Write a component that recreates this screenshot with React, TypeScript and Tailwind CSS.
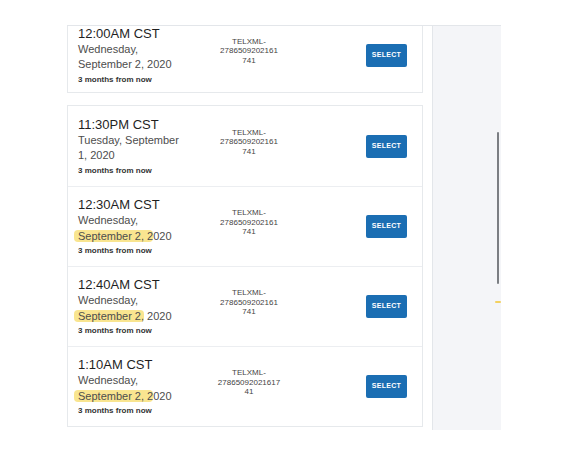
import React from 'react';

type Slot = {
  time: string;
  day: string;
  date: string;
  highlight?: string;
  rest?: string;
  id: string[];
};

const FIRST: Slot = {
  time: '12:00AM CST',
  day: 'Wednesday,',
  date: 'September 2, 2020',
  id: ['TELXML-', '2786509202161', '741'],
};

const SLOTS: Slot[] = [
  { time: '11:30PM CST', day: 'Tuesday, September', date: '1, 2020', id: ['TELXML-', '2786509202161', '741'] },
  { time: '12:30AM CST', day: 'Wednesday,', date: '', highlight: 'September 2, 2', rest: '020', id: ['TELXML-', '2786509202161', '741'] },
  { time: '12:40AM CST', day: 'Wednesday,', date: '', highlight: 'September 2,', rest: ' 2020', id: ['TELXML-', '2786509202161', '741'] },
  { time: '1:10AM CST', day: 'Wednesday,', date: '', highlight: 'September 2, 2', rest: '020', id: ['TELXML-', '27865092021617', '41'] },
];

const Row = ({ slot, first, tall }: { slot: Slot; first?: boolean; tall?: boolean }) => (
  <div
    className={`flex items-center pl-[10px] pr-[15px] ${tall ? 'h-[78px] pt-[4px]' : 'h-[80px]'} ${
      first ? '' : 'border-t border-[#eceef1]'
    }`}
  >
    {/* date column */}
    <div className="w-[106px]">
      <div className="text-[13px] leading-[16px] font-medium text-[#1f1f1f]">{slot.time}</div>
      <div className="text-[11px] leading-[15.5px] text-[#4d4d4d]">
        {slot.day}
        <br />
        {slot.highlight ? (
          <>
            <span className="bg-[#f7dc6b]/75 rounded-[4px] -ml-[4px] pl-[4px]">{slot.highlight}</span>
            {slot.rest}
          </>
        ) : (
          slot.date
        )}
      </div>
      <div className="mt-[2px] text-[8px] leading-[10px] font-bold text-[#333]">3 months from now</div>
    </div>

    {/* id column */}
    <div className="w-[130px] text-center text-[8px] leading-[9.5px] text-[#444] -mt-[8px]">
      {slot.id.map((l, i) => (
        <div key={i}>{l}</div>
      ))}
    </div>

    <div className="flex-1" />

    <button className="w-[41px] h-[23px] rounded-[2px] bg-[#1b6eb3] text-white text-[7px] font-semibold tracking-[0.3px]">
      SELECT
    </button>
  </div>
);

export default function App() {
  return (
    <div className="w-[566px] h-[451px] bg-white overflow-hidden" style={{ fontFamily: '"Liberation Sans", Arial, sans-serif' }}>
      <div className="ml-[67px] mt-[25px] w-[434px] h-[405px] border-t border-[#e3e6ea] flex">
        {/* list, scrolled a little */}
        <div className="w-[365px] overflow-hidden">
          <div className="-mt-[13px] w-[356px] border border-[#e6e9ec] bg-white">
            <Row slot={FIRST} first tall />
          </div>
          <div className="mt-[12px] w-[356px] border border-[#e6e9ec] bg-white">
            {SLOTS.map((s, i) => (
              <Row key={i} slot={s} first={i === 0} />
            ))}
          </div>
        </div>

        {/* side panel */}
        <div className="relative flex-1 bg-[#f4f5f8] border-l border-[#e3e6ea]">
          <div className="absolute right-[2px] top-[106px] h-[152px] w-[2px] rounded bg-[#7b7e83]" />
          <div className="absolute right-0 top-[275px] h-[2px] w-[6px] rounded bg-[#f3d160]" />
        </div>
      </div>
    </div>
  );
}
